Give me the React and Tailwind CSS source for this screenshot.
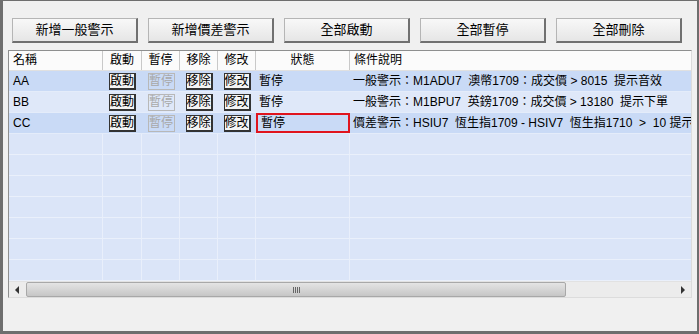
const buttons = ["新增一般警示", "新增價差警示", "全部啟動", "全部暫停", "全部刪除"];

const rows = [
  {
    name: "AA",
    status: "暫停",
    desc: "一般警示：M1ADU7  澳幣1709：成交價 > 8015  提示音效",
    bg: "bg-[#c9daf6]",
  },
  {
    name: "BB",
    status: "暫停",
    desc: "一般警示：M1BPU7  英鎊1709：成交價 > 13180  提示下單",
    bg: "bg-[#dfe8f9]",
  },
  {
    name: "CC",
    status: "暫停",
    desc: "價差警示：HSIU7  恆生指1709 - HSIV7  恆生指1710  >  10 提示音效",
    bg: "bg-[#c9daf6]",
    marked: true,
  },
];

const font = { fontFamily: '"Liberation Sans", "Noto Sans CJK TC", sans-serif' };

function CellButton({ label, disabled }) {
  return (
    <span
      className={
        "inline-flex h-[17px] w-[27px] items-center justify-center text-[12px] leading-none " +
        (disabled
          ? "border border-[#b8b8b8] text-[#a8a8a8]"
          : "border border-[#333] border-b-[2px] border-r-[2px] bg-[#f4f4f4] text-black")
      }
    >
      {label}
    </span>
  );
}

export default function App() {
  return (
    <div
      className="w-[699px] h-[334px] bg-[#f0f0f0] border-t border-l-[3px] border-r-[2px] border-b-[3px] border-[#6e6e6e] flex flex-col overflow-hidden text-black"
      style={font}
    >
      <div className="flex gap-[10px] pl-[9px] pt-[17px]">
        {buttons.map((b) => (
          <button
            key={b}
            className="w-[126px] h-[25px] text-[13px] bg-gradient-to-b from-[#f8f8f8] to-[#e6e6e6] border border-[#b5b5b5] border-b-[#707070] border-r-[#707070] border-b-2 border-r-2"
          >
            {b}
          </button>
        ))}
      </div>

      <div className="ml-[5px] mt-[7px] w-[684px] h-[248px] border border-[#8e8f8f] border-r-[#dcdcdc] border-b-[#dcdcdc] bg-[#dbe5f8] flex flex-col">
        <div className="flex-1 overflow-hidden">
          <div className="w-[780px] text-[12px]">
            <div className="flex h-[20px] bg-[#fbfbfb] border-b border-[#e0e0e0]">
              <div className="w-[94px] pl-[4px] border-r border-[#c9c9c9] leading-[19px]">名稱</div>
              <div className="w-[39px] text-center border-r border-[#c9c9c9] leading-[19px]">啟動</div>
              <div className="w-[38px] text-center border-r border-[#c9c9c9] leading-[19px]">暫停</div>
              <div className="w-[38px] text-center border-r border-[#c9c9c9] leading-[19px]">移除</div>
              <div className="w-[38px] text-center border-r border-[#c9c9c9] leading-[19px]">修改</div>
              <div className="w-[94px] text-center border-r border-[#c9c9c9] leading-[19px]">狀態</div>
              <div className="flex-1 pl-[4px] leading-[19px]">條件說明</div>
            </div>

            {rows.map((r) => (
              <div key={r.name} className={"flex h-[21px] items-center border-b border-[#e4ecfa] " + r.bg}>
                <div className="w-[94px] pl-[4px]">{r.name}</div>
                <div className="w-[39px] flex justify-center">
                  <CellButton label="啟動" />
                </div>
                <div className="w-[38px] flex justify-center">
                  <CellButton label="暫停" disabled />
                </div>
                <div className="w-[38px] flex justify-center">
                  <CellButton label="移除" />
                </div>
                <div className="w-[38px] flex justify-center">
                  <CellButton label="修改" />
                </div>
                <div
                  className={
                    "w-[94px] h-full flex items-center pl-[3px] " +
                    (r.marked ? "border-2 border-[#e0141e]" : "")
                  }
                >
                  {r.status}
                </div>
                <div className="flex-1 pl-[3px] whitespace-pre">{r.desc}</div>
              </div>
            ))}

            {Array.from({ length: 8 }).map((_, i) => (
              <div key={i} className="flex h-[21px] border-b border-[#eaf0fb]">
                <div className="w-[94px] border-r border-[#e9effb]" />
                <div className="w-[39px] border-r border-[#e9effb]" />
                <div className="w-[38px] border-r border-[#e9effb]" />
                <div className="w-[38px] border-r border-[#e9effb]" />
                <div className="w-[38px] border-r border-[#e9effb]" />
                <div className="w-[94px] border-r border-[#e9effb]" />
                <div className="flex-1" />
              </div>
            ))}
          </div>
        </div>

        <div className="h-[16px] flex bg-[#ececec] border-t border-[#e2e2e2]">
          <div className="w-[17px] flex items-center justify-center">
            <svg width="5" height="8" viewBox="0 0 5 8">
              <path d="M4 0 L0 4 L4 8 Z" fill="#333" />
            </svg>
          </div>
          <div className="w-[540px] bg-gradient-to-b from-[#e4e4e4] to-[#c6c6c6] border border-[#a8a8a8] rounded-[2px] flex items-center justify-center">
            <span className="flex gap-[1px]">
              <span className="w-px h-[6px] bg-[#666]" />
              <span className="w-px h-[6px] bg-[#666]" />
              <span className="w-px h-[6px] bg-[#666]" />
              <span className="w-px h-[6px] bg-[#666]" />
            </span>
          </div>
          <div className="flex-1" />
          <div className="w-[17px] flex items-center justify-center">
            <svg width="5" height="8" viewBox="0 0 5 8">
              <path d="M1 0 L5 4 L1 8 Z" fill="#333" />
            </svg>
          </div>
        </div>
      </div>
    </div>
  );
}
